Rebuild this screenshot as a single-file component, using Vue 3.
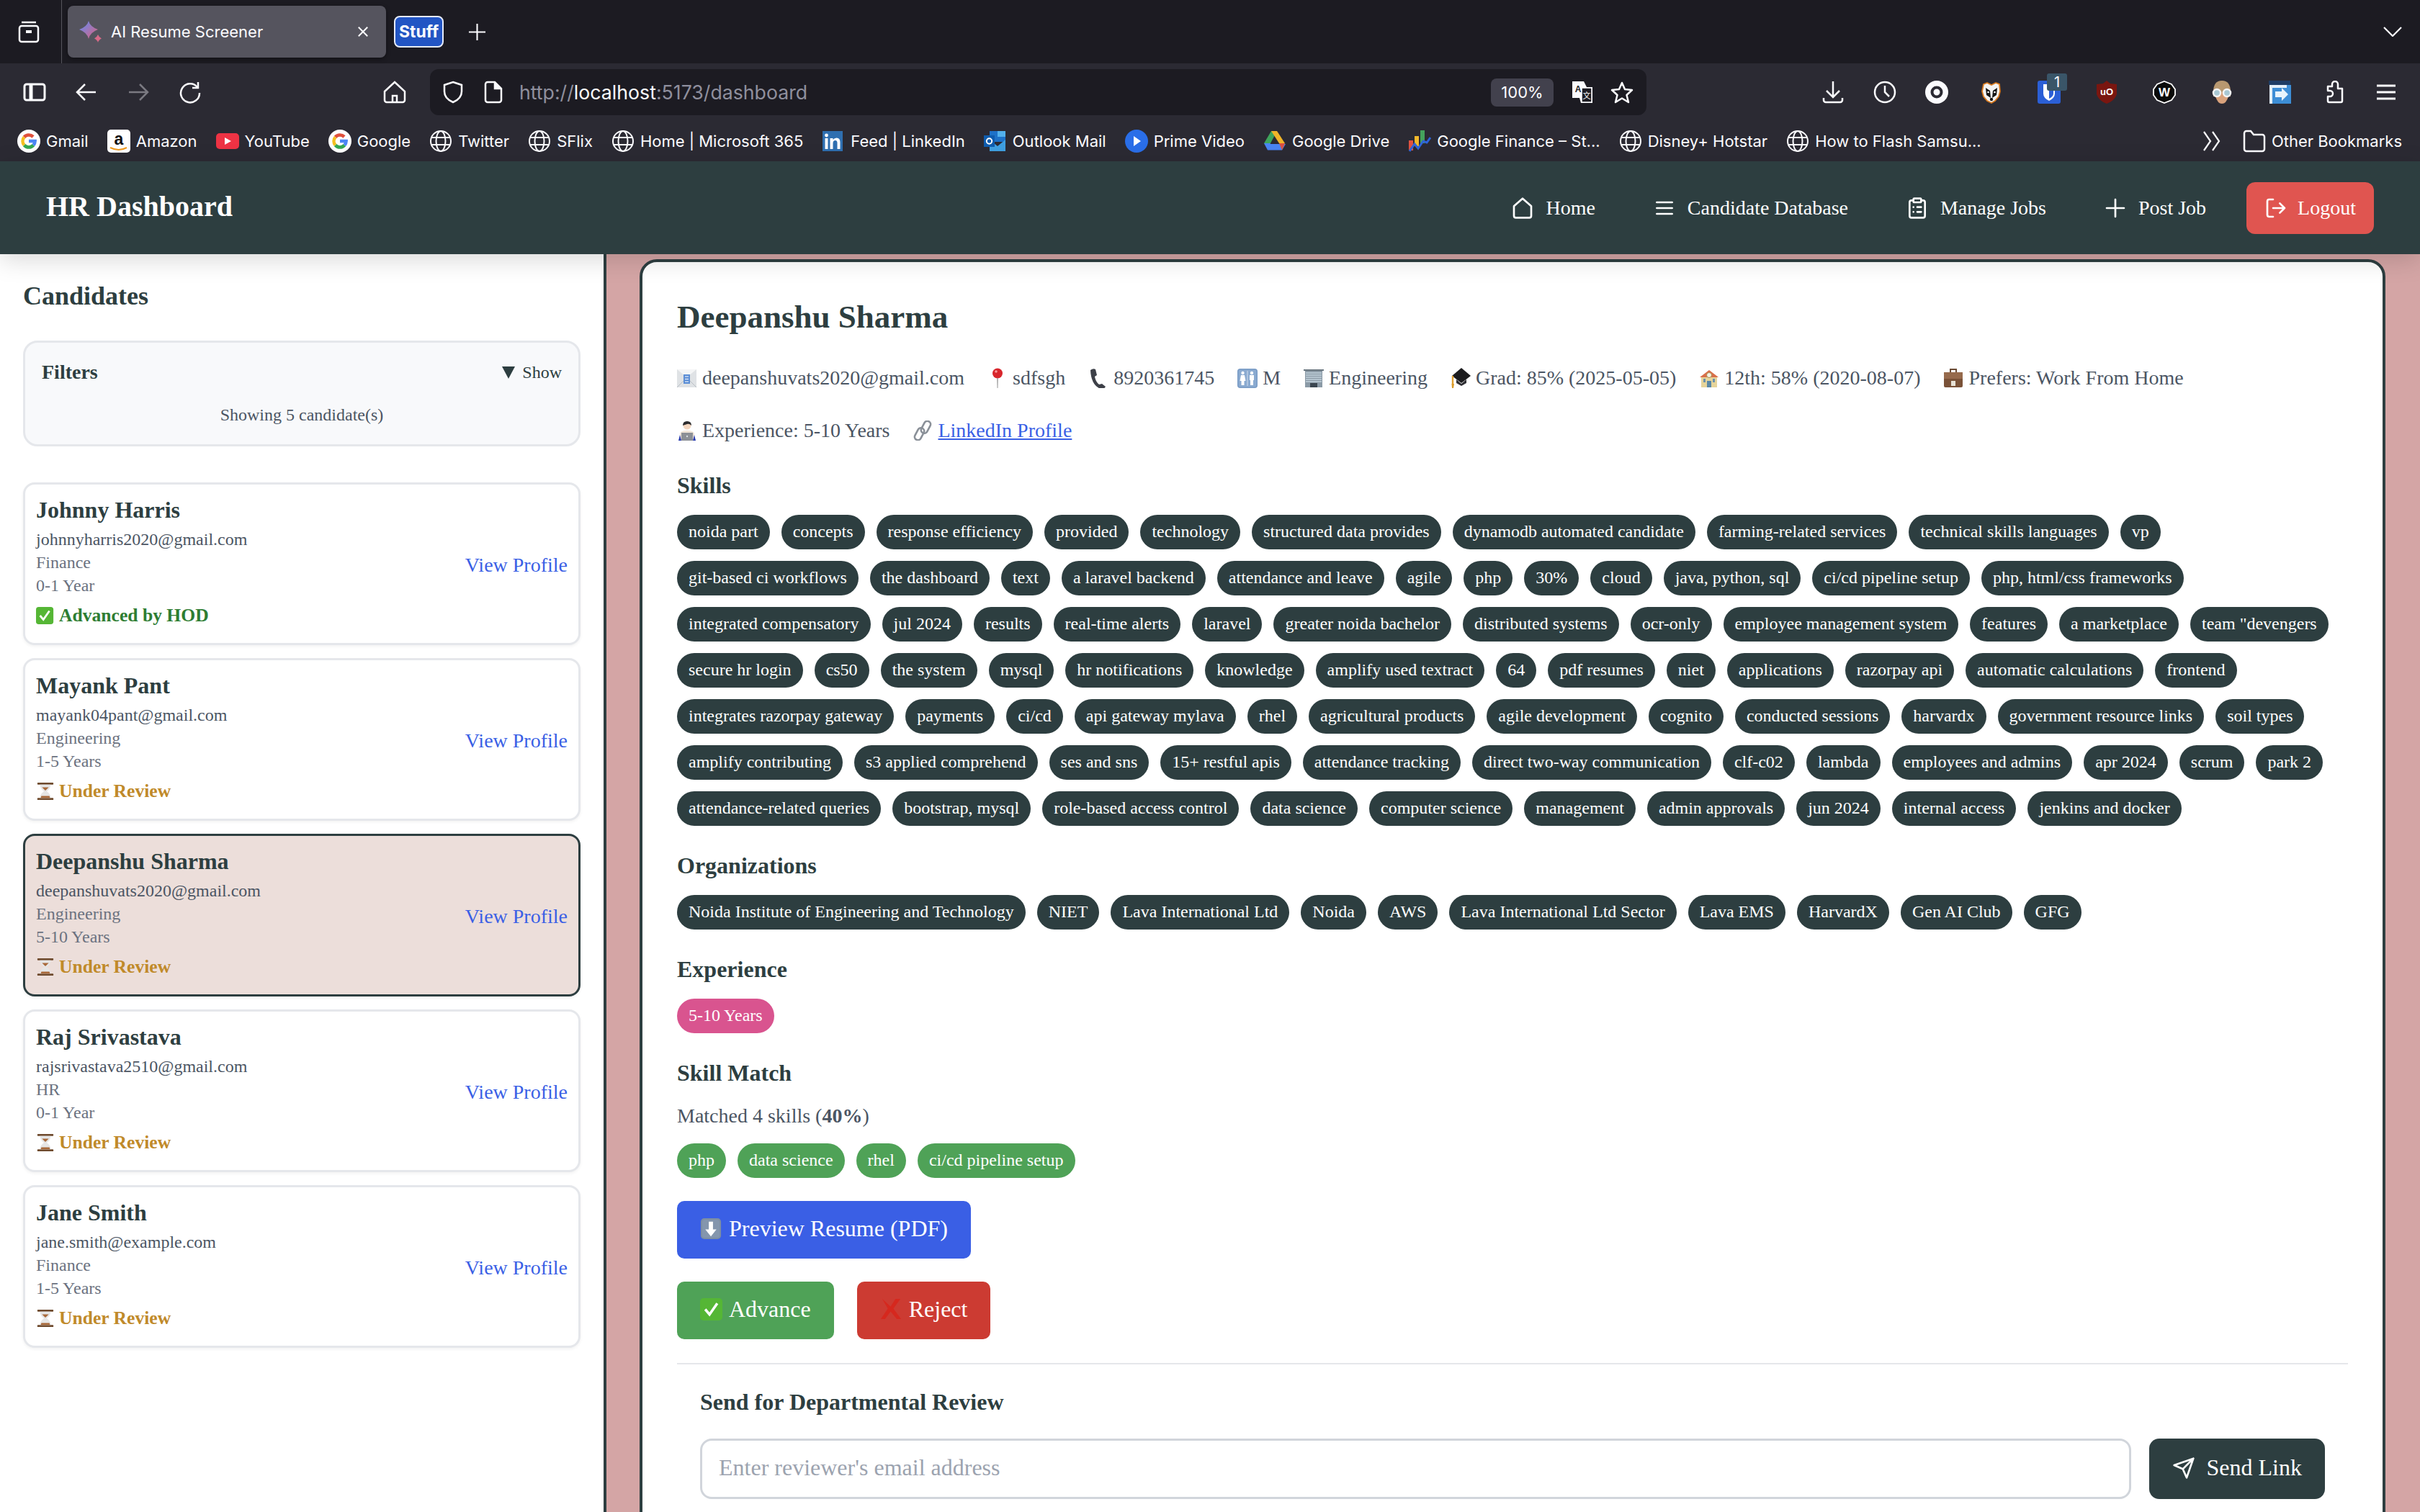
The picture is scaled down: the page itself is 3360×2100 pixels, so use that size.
<script setup>
const globe = '<g fill="none" stroke="#fbfbfe" stroke-width="2"><circle cx="16" cy="16" r="14"/><ellipse cx="16" cy="16" rx="6.5" ry="14"/><path d="M3 11h26M3 21h26"/></g>'
const google = '<circle cx="16" cy="16" r="16" fill="#fff"/><g fill="none" stroke-width="4.6"><path d="M9.6 10.4A8.6 8.6 0 0 1 22 10" stroke="#e0503c"/><path d="M9.6 10.4A8.6 8.6 0 0 0 9.6 21.6" stroke="#f4c020"/><path d="M9.6 21.6A8.6 8.6 0 0 0 22.4 21.6" stroke="#36a853"/><path d="M22.4 21.6A8.6 8.6 0 0 0 24.6 16H16" stroke="#4a85f4"/></g>'

const bookmarks = [
  { label: 'Gmail', icon: google },
  { label: 'Amazon', icon: '<rect width="32" height="32" rx="5" fill="#fff"/><text x="16" y="21" text-anchor="middle" font-family="Liberation Sans" font-weight="700" font-size="23" fill="#111">a</text><path d="M4 25q12 6 23 0" fill="none" stroke="#f09a1e" stroke-width="2"/>' },
  { label: 'YouTube', icon: '<rect y="5" width="32" height="22" rx="5" fill="#ee3344"/><path d="M12 11l9 5-9 5z" fill="#fff"/>' },
  { label: 'Google', icon: google },
  { label: 'Twitter', icon: globe },
  { label: 'SFlix', icon: globe },
  { label: 'Home | Microsoft 365', icon: globe },
  { label: 'Feed | LinkedIn', icon: '<rect x="1" y="2" width="28" height="28" fill="#2f6fb0"/><circle cx="6.5" cy="8" r="2.4" fill="#fff"/><path d="M4.5 12h4v15h-4zM11.500 12h4v2q2-2.500 5-2.500 5 0 5 6V27h-4v-8.500q0-3.500-2.600-3.500-3.400 0-3.400 4V27h-4z" fill="#fff"/>' },
  { label: 'Outlook Mail', icon: '<path d="M8 2h22v15H8z" fill="#1e72c8"/><path d="M19 2h11v8H19z" fill="#52b0ec"/><path d="M8 14l11 9 11-9v16H8z" fill="#3f9fe0"/><rect y="8" width="15" height="16" fill="#0f5cae"/><circle cx="7.500" cy="16" r="3.700" fill="none" stroke="#fff" stroke-width="2"/>' },
  { label: 'Prime Video', icon: '<circle cx="16" cy="16" r="16" fill="#2a6ee8"/><path d="M12 9l10 7-10 7z" fill="#fff"/>' },
  { label: 'Google Drive', icon: '<path d="M11 2h8l-9 17H1z" fill="#3fa45b"/><path d="M11 2h8l11 17h-8z" fill="#f0b429"/><path d="M7 20h24l-5 8.500H6z" fill="#4a85f4"/><path d="M22 19h8l-4 9.500z" fill="#dc5040"/><path d="M1 19l5 9.500 4-9.500z" fill="#4a85f4"/>' },
  { label: 'Google Finance – St...', icon: '<path d="M1 15h6v14H1z" fill="#df5240"/><path d="M9 9h6v14H9z" fill="#f3b82b"/><path d="M17 1h6v18h-6z" fill="#44a35c"/><path d="M2 30l7-10 5 6 7-10 5 2 5-7" fill="none" stroke="#2e63d8" stroke-width="3"/>' },
  { label: 'Disney+ Hotstar', icon: globe },
  { label: 'How to Flash Samsu...', icon: globe }
]

const emoji = {
  mail: '<rect x="0" y="2" width="27" height="25" fill="#dfe2e5"/><path d="M0 2l13.500 11L27 2z" fill="#f4f5f6"/><path d="M0 27l10-10M27 27L17 17" stroke="#b9bec4"/><rect x="9" y="9" width="9" height="13" fill="#5d8fd6"/><path d="M11 12h5M11 15.500h5M11 19h5" stroke="#fff" stroke-width="1.200"/>',
  pin: '<circle cx="14" cy="7.500" r="7" fill="#d8262c"/><circle cx="12" cy="5" r="1.800" fill="#f59a9a"/><path d="M13.200 14h1.600l-.3 14h-1z" fill="#9a9a9a"/>',
  phone: '<path d="M3 3q4-3 7-1l2 8-3 2q1 7 6 11l4-1 5 4q-2 4-7 3Q4 24 3 3z" fill="#3d4048"/>',
  restroom: '<rect x="0" y="1" width="28" height="27" rx="4" fill="#7a9cc6"/><rect x="1.500" y="2.500" width="25" height="24" rx="3" fill="#8aaad0"/><path d="M13.700 4v21h.6V4z" fill="#fff"/><circle cx="7.500" cy="7" r="2.200" fill="#fff"/><path d="M5 10h5l1.500 8H9.500v6h-4v-6H3.500z" fill="#fff"/><circle cx="20" cy="7" r="2.200" fill="#fff"/><path d="M17 10h6v7h-1v7h-4v-7h-1z" fill="#fff"/>',
  office: '<rect x="2" y="3" width="24" height="24" fill="#8b9aa6"/><path d="M3 7h22M3 10h22M3 13h22M3 16h22M3 19h22" stroke="#c4d3de" stroke-width="1.500"/><rect x="0" y="2" width="28" height="2" fill="#69767f"/><rect x="9" y="21" width="10" height="6" fill="#3b4650"/>',
  grad: '<path d="M15 0l13 11-13 10L2 11z" fill="#1c1c1e"/><path d="M8 16l7 6 7-6v5l-7 4-7-4z" fill="#2f2f33"/><path d="M3 11v12" stroke="#e0a030" stroke-width="2.400"/><path d="M1.500 22h3.500l-1 6H2z" fill="#d99a28"/>',
  school: '<rect x="3" y="11" width="22" height="16" fill="#e6d49a"/><path d="M1 13L14 3l13 10z" fill="#d96f4a"/><circle cx="14" cy="10" r="3.500" fill="#f4f1e4" stroke="#a88a4a"/><path d="M6 15h3v5H6zM19 15h3v5h-3z" fill="#6c93ad"/><rect x="11" y="18" width="6" height="9" fill="#5b88a6"/>',
  case: '<path d="M10 6V2h8v4" fill="none" stroke="#6a4a34" stroke-width="2"/><rect x="1" y="6" width="26" height="21" rx="2" fill="#7a5238"/><rect x="1" y="6" width="26" height="9" fill="#966a4c"/><rect x="11" y="18" width="6" height="7" fill="#e8e2d6"/>',
  tech: '<circle cx="14" cy="7" r="5.500" fill="#f4d6bf"/><path d="M8 7q0-6 6-6t6 6q-3-3-6-2t-6 2z" fill="#2b2b2d"/><path d="M4 28v-9q0-5 10-5t10 5v9z" fill="#f0e5d8"/><path d="M4 20l-2 8h4zM24 20l2 8h-4z" fill="#2a3db0"/><rect x="6" y="17" width="16" height="11" fill="#8c9096"/><circle cx="14" cy="22" r="1.200" fill="#dcdfe2"/>',
  link: '<g fill="none" stroke="#8a9098" stroke-width="2.600"><rect x="14" y="0" width="9" height="18" rx="4.500" transform="rotate(28 18 9)"/><rect x="5" y="10" width="9" height="18" rx="4.500" transform="rotate(28 10 19)"/></g>',
  hourglass: '<rect x="2" y="1" width="24" height="3" rx="1" fill="#6e4a2d"/><rect x="2" y="24" width="24" height="3" rx="1" fill="#6e4a2d"/><path d="M6 4h16q0 6-6 10 6 4 6 10H6q0-6 6-10Q6 10 6 4z" fill="#e6e6e6"/><path d="M8 21h12l1 3H7z" fill="#a8693a"/><path d="M9 8h10l-5 5z" fill="#a8693a"/>',
  check: '<rect x="0" y="1" width="26" height="26" rx="4" fill="#55b635"/><path d="M6 14l5 6 9-13" fill="none" stroke="#fff" stroke-width="3"/>',
  down: '<rect x="1" y="1" width="29" height="30" rx="5" fill="#7d8ea3"/><rect x="3" y="3" width="25" height="26" rx="4" fill="#8496ad"/><path d="M12.500 6h6v11h5L15.500 27l-8-10h5z" fill="#fff"/>',
  cross: '<path d="M3 1l12 11L22 1h7L19 15l11 15h-6L15 19 7 30H1l10-15z" fill="#d6281e"/>'
}

const metaFirst = [
  { icon: 'mail', text: 'deepanshuvats2020@gmail.com' },
  { icon: 'pin', text: 'sdfsgh' },
  { icon: 'phone', text: '8920361745' },
  { icon: 'restroom', text: 'M' },
  { icon: 'office', text: 'Engineering' },
  { icon: 'grad', text: 'Grad: 85% (2025-05-05)' },
  { icon: 'school', text: '12th: 58% (2020-08-07)' },
  { icon: 'case', text: 'Prefers: Work From Home' },
  { icon: 'tech', text: 'Experience: 5-10 Years' }
]

const candidates = [
  { name: 'Johnny Harris', email: 'johnnyharris2020@gmail.com', dept: 'Finance', exp: '0-1 Year', advanced: true },
  { name: 'Mayank Pant', email: 'mayank04pant@gmail.com', dept: 'Engineering', exp: '1-5 Years' },
  { name: 'Deepanshu Sharma', email: 'deepanshuvats2020@gmail.com', dept: 'Engineering', exp: '5-10 Years', active: true },
  { name: 'Raj Srivastava', email: 'rajsrivastava2510@gmail.com', dept: 'HR', exp: '0-1 Year' },
  { name: 'Jane Smith', email: 'jane.smith@example.com', dept: 'Finance', exp: '1-5 Years' }
]

const skills = [
  'noida part', 'concepts', 'response efficiency', 'provided', 'technology', 'structured data provides', 'dynamodb automated candidate', 'farming-related services', 'technical skills languages', 'vp',
  'git-based ci workflows', 'the dashboard', 'text', 'a laravel backend', 'attendance and leave', 'agile', 'php', '30%', 'cloud', 'java, python, sql', 'ci/cd pipeline setup', 'php, html/css frameworks',
  'integrated compensatory', 'jul 2024', 'results', 'real-time alerts', 'laravel', 'greater noida bachelor', 'distributed systems', 'ocr-only', 'employee management system', 'features', 'a marketplace', 'team "devengers',
  'secure hr login', 'cs50', 'the system', 'mysql', 'hr notifications', 'knowledge', 'amplify used textract', '64', 'pdf resumes', 'niet', 'applications', 'razorpay api', 'automatic calculations', 'frontend',
  'integrates razorpay gateway', 'payments', 'ci/cd', 'api gateway mylava', 'rhel', 'agricultural products', 'agile development', 'cognito', 'conducted sessions', 'harvardx', 'government resource links', 'soil types',
  'amplify contributing', 's3 applied comprehend', 'ses and sns', '15+ restful apis', 'attendance tracking', 'direct two-way communication', 'clf-c02', 'lambda', 'employees and admins', 'apr 2024', 'scrum', 'park 2',
  'attendance-related queries', 'bootstrap, mysql', 'role-based access control', 'data science', 'computer science', 'management', 'admin approvals', 'jun 2024', 'internal access', 'jenkins and docker'
]

const organizations = ['Noida Institute of Engineering and Technology', 'NIET', 'Lava International Ltd', 'Noida', 'AWS', 'Lava International Ltd Sector', 'Lava EMS', 'HarvardX', 'Gen AI Club', 'GFG']
const matched = ['php', 'data science', 'rhel', 'ci/cd pipeline setup']
</script>

<template>
  <div class="app">
    <!-- browser window -->
    <div class="tabstrip">
      <svg class="tb-icon view-icon" viewBox="0 0 32 32" fill="none" stroke="#fbfbfe" stroke-width="2.500"><path d="M6 3h20"/><rect x="3" y="8" width="26" height="22" rx="3"/><rect x="12" y="14" width="8" height="4" fill="#fbfbfe" stroke="none"/></svg>
      <div class="tab">
        <svg class="tab-icon" viewBox="0 0 32 30"><defs><linearGradient id="spark" x1="0" y1="0" x2="1" y2="1"><stop offset="0" stop-color="#5f8df5"/><stop offset="1" stop-color="#e0607a"/></linearGradient></defs><path d="M13 0q2 8 13 12-11 4-13 13Q11 16 0 12 11 8 13 0z" fill="url(#spark)"/><path d="M26 19q1 3 5 5.500-4 2-5 5.500-1-3.500-5-5.500 4-2.500 5-5.500z" fill="#d86a88"/></svg>
        <span class="tab-title">AI Resume Screener</span>
        <svg class="tab-close" viewBox="0 0 18 18" fill="none" stroke="#fbfbfe" stroke-width="2.200"><path d="M2 2l14 14M16 2L2 16"/></svg>
      </div>
      <div class="tab-group">Stuff</div>
      <svg class="tab-plus" viewBox="0 0 26 26" fill="none" stroke="#fbfbfe" stroke-width="2.200"><path d="M13 1v24M1 13h24"/></svg>
      <svg class="tab-list" viewBox="0 0 28 14" fill="none" stroke="#fbfbfe" stroke-width="2.200"><path d="M2 1l12 12L26 1"/></svg>
    </div>

    <div class="toolbar">
      <div class="tb-nav">
        <svg class="tb-icon" viewBox="0 0 32 32" fill="none" stroke="#fbfbfe" stroke-width="3"><rect x="2" y="5" width="28" height="22" rx="3"/><path d="M11 5v22" stroke-width="5"/></svg>
        <svg class="tb-icon" viewBox="0 0 32 32" fill="none" stroke="#fbfbfe" stroke-width="2.500"><path d="M29 16H3M14 5L3 16l11 11"/></svg>
        <svg class="tb-icon" viewBox="0 0 32 32" fill="none" stroke="#7b7a82" stroke-width="2.500"><path d="M3 16h26M18 5l11 11-11 11"/></svg>
        <svg class="tb-icon" viewBox="0 0 32 32" fill="none" stroke="#fbfbfe" stroke-width="2.500"><path d="M26 9A13 13 0 1 0 29 17"/><path d="M27 2v8h-8"/></svg>
      </div>
      <svg class="tb-icon home-btn" viewBox="0 0 32 32" fill="none" stroke="#fbfbfe" stroke-width="2.500"><path d="M2 15L16 2l14 13v12a3 3 0 0 1-3 3H5a3 3 0 0 1-3-3z"/><path d="M13 30v-9h6v9"/></svg>
      <div class="urlbar">
        <svg class="tb-icon" viewBox="0 0 32 32" fill="none" stroke="#fbfbfe" stroke-width="2.500"><path d="M16 2l12 4v9q0 10-12 15Q4 25 4 15V6z"/></svg>
        <svg class="tb-icon doc" viewBox="0 0 32 32" fill="none" stroke="#fbfbfe" stroke-width="2.500"><path d="M5 5a3 3 0 0 1 3-3h10l9 9v16a3 3 0 0 1-3 3H8a3 3 0 0 1-3-3z"/><path d="M18 2v9h9" fill="#fbfbfe"/></svg>
        <span class="url"><span class="url-dim">http://</span>localhost<span class="url-dim">:5173/dashboard</span></span>
        <span class="zoom-chip">100%</span>
        <svg class="tb-icon" viewBox="0 0 32 32"><path d="M2 1h16l4 8h8v22H14l-2-7H2z" fill="#fbfbfe"/><rect x="15" y="10" width="14" height="20" fill="#1c1b22" stroke="#fbfbfe" stroke-width="1.500"/><text x="10" y="16" text-anchor="middle" font-family="Liberation Sans" font-weight="700" font-size="12" fill="#1c1b22">A</text><text x="22" y="25" text-anchor="middle" font-family="Noto Sans CJK SC" font-size="11" fill="#fbfbfe">文</text></svg>
        <svg class="tb-icon star" viewBox="0 0 32 32" fill="none" stroke="#fbfbfe" stroke-width="2.500" stroke-linejoin="round"><path d="M16 3l4 9 10 1-7.500 7 2.500 10-9-5.500L7 30l2.500-10L2 13l10-1z"/></svg>
      </div>
      <div class="tb-right">
        <div class="tb-group">
          <svg class="tb-icon" viewBox="0 0 32 32" fill="none" stroke="#fbfbfe" stroke-width="2.500"><path d="M16 1v21M7 14l9 9 9-9M3 24v3a3 3 0 0 0 3 3h20a3 3 0 0 0 3-3v-3"/></svg>
          <svg class="tb-icon" viewBox="0 0 32 32" fill="none" stroke="#fbfbfe" stroke-width="2.500"><circle cx="16" cy="16" r="14"/><path d="M16 7v9l6 6"/></svg>
          <svg class="tb-icon" viewBox="0 0 32 32"><circle cx="16" cy="16" r="16" fill="#fbfbfe"/><circle cx="16" cy="16" r="6.500" fill="none" stroke="#2b2a33" stroke-width="4"/></svg>
        </div>
        <div class="ext-group">
          <svg class="tb-icon" viewBox="0 0 32 32"><path d="M5 5l5-2 6 3 6-3 5 2 1 10-2 7-5 6-5 3-6-3-5-6-2-7z" fill="#f4f4f4" stroke="#d97a20" stroke-width="1.800"/><path d="M8 10l6 4 1 10-6-4zM24 10l-6 4-1 10 6-4z" fill="#141414"/><circle cx="16" cy="26" r="2.200" fill="#141414"/><circle cx="11.500" cy="16" r="1.300" fill="#fff"/><circle cx="20.500" cy="16" r="1.300" fill="#fff"/></svg>
          <div class="bitwarden">
            <svg class="tb-icon" viewBox="0 0 32 32"><rect width="32" height="32" rx="3" fill="#2b5fd6"/><path d="M8 5h16v13q0 6-8 10-8-4-8-10z" fill="#fff"/><path d="M16 7h6v11q0 4-6 7z" fill="#2b5fd6"/></svg>
            <span class="ext-badge">1</span>
          </div>
          <svg class="tb-icon" viewBox="0 0 32 32"><path d="M16 0l5 4 9 1v14q-3 9-14 13Q5 28 2 19V5l9-1z" fill="#7a1610"/><text x="16" y="20" text-anchor="middle" font-family="Liberation Sans" font-weight="700" font-size="13" fill="#fff">uO</text></svg>
          <svg class="tb-icon" viewBox="0 0 32 32"><path d="M16 1l10 4 5 7v8l-5 7-10 4-10-4-5-7v-8l5-7z" fill="#0a0a0a" stroke="#fff" stroke-width="1.800"/><text x="16" y="22" text-anchor="middle" font-family="Liberation Sans" font-weight="700" font-size="17" fill="#fff">W</text></svg>
          <svg class="tb-icon" viewBox="0 0 32 32"><path d="M4 16Q4 0 16 0t12 16v6H4z" fill="#b89870"/><path d="M7 16h18v6q-3 10-9 10t-9-10z" fill="#d9a27c"/><g fill="#a8c8d4" stroke="#f4f4f4" stroke-width="2.500"><circle cx="9" cy="17" r="5"/><circle cx="23" cy="17" r="5"/></g></svg>
          <svg class="tb-icon" viewBox="0 0 32 32"><rect x="1" y="0" width="30" height="6" fill="#1e3d66"/><rect x="2" y="6" width="30" height="26" fill="#3d8ed6"/><rect x="2" y="6" width="24" height="4" fill="#e4f0fa"/><path d="M2 6h4v26H2z" fill="#e4f0fa"/><path d="M10 15h9v-5l9 9-9 9v-5h-9z" fill="#e8f4fc"/></svg>
        </div>
        <div class="tb-group">
          <svg class="tb-icon" viewBox="0 0 32 32" fill="none" stroke="#fbfbfe" stroke-width="2.500" stroke-linejoin="round"><path d="M13 8V5a4 4 0 0 1 8 0v6h6v17a2 2 0 0 1-2 2H9a2 2 0 0 1-2-2v-6h3a4 4 0 0 0 0-8H7v-6z"/></svg>
          <svg class="tb-icon" viewBox="0 0 32 32" fill="none" stroke="#fbfbfe" stroke-width="2.800"><path d="M3 7h26M3 16h26M3 25h26"/></svg>
        </div>
      </div>
    </div>

    <div class="bookmarks">
      <div v-for="b in bookmarks" :key="b.label" class="bookmark">
        <svg class="bm-icon" viewBox="0 0 32 32" v-html="b.icon"></svg>
        <span>{{ b.label }}</span>
      </div>
      <div class="bm-right">
        <svg class="bm-more" viewBox="0 0 26 30" fill="none" stroke="#fbfbfe" stroke-width="2.200"><path d="M2 2l9 13-9 13M14 2l9 13-9 13"/></svg>
        <div class="bookmark">
          <svg class="bm-icon" viewBox="0 0 32 32" fill="none" stroke="#fbfbfe" stroke-width="2.500"><path d="M2 5a3 3 0 0 1 3-3h6l4 5h12a3 3 0 0 1 3 3v17a3 3 0 0 1-3 3H5a3 3 0 0 1-3-3z"/></svg>
          <span>Other Bookmarks</span>
        </div>
      </div>
    </div>

    <!-- page -->
    <header class="nav">
      <div class="brand">HR Dashboard</div>
      <nav class="nav-links">
        <a class="nav-link">
          <svg class="nav-icon" viewBox="0 0 24 24"><path d="M3 10l9-8 9 8v10a2 2 0 0 1-2 2H5a2 2 0 0 1-2-2z"/></svg>
          Home
        </a>
        <a class="nav-link">
          <svg class="nav-icon" viewBox="0 0 24 24"><path d="M4 6h16M4 12h16M4 18h16"/></svg>
          Candidate Database
        </a>
        <a class="nav-link">
          <svg class="nav-icon" viewBox="0 0 24 24"><rect x="8" y="2" width="8" height="4" rx="1"/><path d="M16 4h2a2 2 0 0 1 2 2v14a2 2 0 0 1-2 2H6a2 2 0 0 1-2-2V6a2 2 0 0 1 2-2h2M12 11h4M12 16h4M8 11h.01M8 16h.01"/></svg>
          Manage Jobs
        </a>
        <a class="nav-link">
          <svg class="nav-icon" viewBox="0 0 24 24"><path d="M12 3v18M3 12h18"/></svg>
          Post Job
        </a>
        <button class="logout">
          <svg class="nav-icon" viewBox="0 0 24 24"><path d="M9 21H5a2 2 0 0 1-2-2V5a2 2 0 0 1 2-2h4M16 17l5-5-5-5M21 12H9"/></svg>
          Logout
        </button>
      </nav>
    </header>

    <div class="layout">
      <aside class="sidebar">
        <h2 class="side-title">Candidates</h2>
        <div class="filters">
          <div class="filters-head">
            <span class="filters-label">Filters</span>
            <span class="filters-toggle"><i class="tri"></i>Show</span>
          </div>
          <div class="filters-count">Showing 5 candidate(s)</div>
        </div>
        <div class="cand-list">
          <div v-for="c in candidates" :key="c.email" class="cand" :class="{ active: c.active }">
            <div>
              <div class="cand-name">{{ c.name }}</div>
              <div class="cand-email">{{ c.email }}</div>
              <div class="cand-sub">{{ c.dept }}</div>
              <div class="cand-sub">{{ c.exp }}</div>
              <div class="cand-status" :class="c.advanced ? 'ok' : 'wait'">
                <svg class="status-icon" viewBox="0 0 28 28" v-html="c.advanced ? emoji.check : emoji.hourglass"></svg>
                {{ c.advanced ? 'Advanced by HOD' : 'Under Review' }}
              </div>
            </div>
            <a class="view-link">View Profile</a>
          </div>
        </div>
      </aside>

      <main class="main">
        <section class="detail">
          <h1 class="detail-name">Deepanshu Sharma</h1>
          <div class="meta">
            <span v-for="m in metaFirst" :key="m.icon" class="meta-item">
              <svg class="meta-icon" viewBox="0 0 28 28" v-html="emoji[m.icon]"></svg>{{ m.text }}
            </span>
            <span class="meta-item">
              <svg class="meta-icon" viewBox="0 0 28 28" v-html="emoji.link"></svg><a class="li-link">LinkedIn Profile</a>
            </span>
          </div>

          <h3 class="sec-title">Skills</h3>
          <div class="tags">
            <span v-for="(s, i) in skills" :key="i" class="tag">{{ s }}</span>
          </div>

          <h3 class="sec-title">Organizations</h3>
          <div class="tags">
            <span v-for="o in organizations" :key="o" class="tag">{{ o }}</span>
          </div>

          <h3 class="sec-title">Experience</h3>
          <div class="tags">
            <span class="tag pink">5-10 Years</span>
          </div>

          <h3 class="sec-title">Skill Match</h3>
          <p class="match-line">Matched 4 skills (<b>40%</b>)</p>
          <div class="tags">
            <span v-for="m in matched" :key="m" class="tag green">{{ m }}</span>
          </div>

          <button class="btn blue preview">
            <svg class="btn-emoji" viewBox="0 0 32 32" v-html="emoji.down"></svg>Preview Resume (PDF)
          </button>
          <div class="actions">
            <button class="btn greenbtn">
              <svg class="btn-emoji" viewBox="0 1 26 26" v-html="emoji.check"></svg>Advance
            </button>
            <button class="btn red">
              <svg class="btn-emoji" viewBox="0 0 32 32" v-html="emoji.cross"></svg>Reject
            </button>
          </div>

          <div class="review">
            <h3 class="review-title">Send for Departmental Review</h3>
            <div class="review-form">
              <input class="review-input" type="email" placeholder="Enter reviewer's email address">
              <button class="send-btn">
                <svg class="nav-icon" viewBox="0 0 24 24"><path d="M22 2l-7 20-4-9-9-4zM22 2L11 13"/></svg>
                Send Link
              </button>
            </div>
          </div>
        </section>
      </main>
    </div>
  </div>
</template>

<style>
body { margin: 0; }
</style>

<style scoped>
.app {
  width: 3360px;
  height: 2100px;
  overflow: hidden;
  display: flex;
  flex-direction: column;
  font-family: "Liberation Serif", serif;
  background: #fff;
}

/* browser */
.tabstrip {
  height: 88px;
  flex-shrink: 0;
  background: #1c1b22;
  display: flex;
  align-items: center;
  position: relative;
  font-family: Inter, sans-serif;
  color: #fbfbfe;
}
.tb-icon { width: 32px; height: 32px; flex-shrink: 0; display: block; }
.view-icon { margin-left: 24px; margin-right: 29px; }
.tabstrip::before {
  content: "";
  position: absolute;
  left: 85px;
  top: 0;
  bottom: 0;
  width: 1px;
  background: #55545c;
}
.tab {
  width: 442px;
  height: 72px;
  margin-left: 9px;
  box-sizing: border-box;
  padding: 0 24px 0 16px;
  border-radius: 8px;
  background: #55545e;
  display: flex;
  align-items: center;
  box-shadow: 0 2px 6px rgba(0, 0, 0, .4);
}
.tab-icon { width: 32px; height: 30px; margin-right: 12px; flex-shrink: 0; }
.tab-title { font-size: 22px; flex: 1; white-space: nowrap; }
.tab-close { width: 16px; height: 16px; }
.tab-group {
  margin-left: 11px;
  width: 69px;
  height: 44px;
  box-sizing: border-box;
  border: 2px solid #e6ecfa;
  border-radius: 8px;
  background: #2255c4;
  font-size: 23px;
  font-weight: 700;
  line-height: 40px;
  text-align: center;
}
.tab-plus { width: 25px; height: 25px; margin-left: 34px; }
.tab-list { width: 28px; height: 14px; margin-left: auto; margin-right: 24px; }

.toolbar {
  height: 72px;
  flex-shrink: 0;
  background: #2b2a33;
  display: flex;
  align-items: flex-end;
  padding-left: 32px;
  font-family: Inter, sans-serif;
  color: #fbfbfe;
}
.tb-nav { height: 64px; display: flex; align-items: center; gap: 40px; }
.home-btn { align-self: flex-end; margin: 0 0 16px 252px; }
.urlbar {
  width: 1689px;
  height: 64px;
  margin-left: 33px;
  box-sizing: border-box;
  padding: 0 18px 0 16px;
  border-radius: 12px;
  background: #1c1b22;
  display: flex;
  align-items: center;
}
.doc { margin-left: 24px; }
.url { margin-left: 20px; font-size: 26.7px; flex: 1; white-space: nowrap; }
.url-dim { color: #8f8f9d; }
.zoom-chip {
  width: 87px;
  height: 39px;
  border-radius: 8px;
  background: #42414d;
  font-size: 22px;
  line-height: 39px;
  text-align: center;
  margin-right: 24px;
}
.star { margin-left: 23px; }
.tb-right {
  height: 64px;
  margin-left: 243px;
  display: flex;
  align-items: center;
  gap: 44px;
}
.tb-group { display: flex; align-items: center; gap: 40px; }
.ext-group { display: flex; align-items: center; gap: 48px; }
.bitwarden { position: relative; }
.ext-badge {
  position: absolute;
  left: 13px;
  top: -10px;
  width: 28px;
  height: 24px;
  border-radius: 3px;
  background: #3a5568;
  font-size: 20px;
  line-height: 24px;
  text-align: center;
}

.bookmarks {
  height: 64px;
  flex-shrink: 0;
  box-sizing: border-box;
  background: #2b2a33;
  display: flex;
  align-items: center;
  gap: 26px;
  padding: 8px 25px 0 24px;
  font-family: Inter, sans-serif;
  font-size: 22px;
  color: #fbfbfe;
  white-space: nowrap;
}
.bookmark { display: flex; align-items: center; gap: 8px; }
.bm-icon { width: 32px; height: 32px; flex-shrink: 0; }
.bm-right { margin-left: auto; display: flex; align-items: center; gap: 30px; }
.bm-more { width: 26px; height: 30px; }

/* nav */
.nav {
  height: 129px;
  flex-shrink: 0;
  box-sizing: border-box;
  padding: 0 64px;
  background: #2d3e40;
  color: #fff;
  display: flex;
  align-items: center;
  justify-content: space-between;
  position: relative;
  z-index: 2;
  box-shadow: 0 8px 32px rgba(0, 0, 0, .15);
}
.brand { font-size: 40px; font-weight: 700; padding-bottom: 4px; }
.nav-links { display: flex; align-items: center; gap: 32px; }
.nav-link {
  display: flex;
  align-items: center;
  gap: 16px;
  padding: 0 24px;
  font-size: 28px;
  color: #fff;
}
.nav-icon {
  width: 32px;
  height: 32px;
  flex-shrink: 0;
  fill: none;
  stroke: currentColor;
  stroke-width: 2;
  stroke-linecap: round;
  stroke-linejoin: round;
}
.logout {
  height: 72px;
  padding: 0 25px;
  border: none;
  border-radius: 12px;
  background: #e05550;
  color: #fff;
  font-family: inherit;
  font-size: 28px;
  display: flex;
  align-items: center;
  gap: 14px;
}

/* sidebar */
.layout { flex: 1; min-height: 0; display: flex; }
.sidebar {
  width: 842px;
  flex-shrink: 0;
  box-sizing: border-box;
  padding: 37px 32px 0;
  background: #fff;
  border-right: 4px solid #2d3e40;
}
.side-title {
  margin: 0 0 41px;
  font-size: 36px;
  line-height: 42px;
  color: #2d3e40;
}
.filters {
  height: 147px;
  box-sizing: border-box;
  padding: 23px 23px 0;
  background: #f8f9fb;
  border: 3px solid #e5e7eb;
  border-radius: 20px;
}
.filters-head { display: flex; justify-content: space-between; align-items: center; height: 36px; }
.filters-label { font-size: 28px; font-weight: 700; color: #2d3e40; }
.filters-toggle { font-size: 24px; color: #2d3e40; display: flex; align-items: center; gap: 10px; }
.tri {
  width: 0;
  height: 0;
  border-left: 9px solid transparent;
  border-right: 9px solid transparent;
  border-top: 17px solid #2d3e40;
}
.filters-count {
  margin-top: 25px;
  font-size: 24px;
  line-height: 32px;
  color: #4b5563;
  text-align: center;
}
.cand-list { margin-top: 50px; display: flex; flex-direction: column; gap: 18px; }
.cand {
  height: 226px;
  box-sizing: border-box;
  padding: 15px 15px 22px;
  border: 3px solid #e5e7eb;
  border-radius: 16px;
  background: #fff;
  box-shadow: 0 2px 4px rgba(0, 0, 0, .05);
  display: flex;
  justify-content: space-between;
  align-items: center;
}
.cand.active { background: #ecdeda; border-color: #2d3e40; }
.cand-name { font-size: 32px; font-weight: 700; line-height: 40px; color: #2d3e40; margin-bottom: 5px; }
.cand-email { font-size: 24px; line-height: 32px; color: #4b5563; }
.cand-sub { font-size: 24px; line-height: 32px; color: #6b7280; }
.cand-status {
  margin-top: 10px;
  font-size: 25.6px;
  font-weight: 700;
  line-height: 32px;
  display: flex;
  align-items: center;
  gap: 6px;
}
.cand-status.ok { color: #2e7d32; }
.cand-status.wait { color: #c08a2a; }
.status-icon { width: 26px; height: 26px; }
.view-link { font-size: 28px; color: #3a5fe5; margin-top: 10px; }

/* detail */
.main {
  flex: 1;
  min-width: 0;
  box-sizing: border-box;
  padding: 7px 48px 0 46px;
  background: #d4a5a5;
  overflow: hidden;
}
.detail {
  box-sizing: border-box;
  min-height: 1800px;
  padding: 50px 48px 48px;
  background: #fff;
  border: 4px solid #2d3e40;
  border-radius: 24px;
}
.detail-name {
  margin: 0 0 38px;
  font-size: 45px;
  line-height: 52px;
  color: #2d3e40;
}
.meta { display: flex; flex-wrap: wrap; gap: 32px; margin-bottom: 37px; }
.meta-item {
  display: flex;
  align-items: center;
  gap: 7px;
  font-size: 28px;
  line-height: 41px;
  color: #4b5563;
}
.meta-icon { width: 28px; height: 28px; flex-shrink: 0; }
.li-link { color: #3a5fe5; text-decoration: underline; }
.sec-title {
  margin: 36px 0 22px;
  font-size: 32px;
  line-height: 38px;
  color: #2d3e40;
}
.meta + .sec-title { margin-top: 0; }
.tags { display: flex; flex-wrap: wrap; gap: 16px; }
.tag {
  height: 48px;
  padding: 0 16px;
  border-radius: 24px;
  background: #2d3e40;
  color: #fff;
  font-size: 24px;
  line-height: 46px;
  white-space: nowrap;
}
.tag.pink { background: #d9548f; }
.tag.green { background: #4fa257; }
.match-line {
  margin: -2px 0 18px;
  font-size: 28px;
  line-height: 41px;
  color: #4b5563;
}
.btn {
  height: 80px;
  padding: 0 32px 4px;
  border: none;
  border-radius: 10px;
  color: #fff;
  font-family: inherit;
  font-size: 32px;
  display: flex;
  align-items: center;
  gap: 9px;
}
.btn.blue { background: #3a5fe5; }
.btn.greenbtn { background: #4fa257; }
.btn.red { background: #cc3b32; }
.preview { margin-top: 32px; }
.btn-emoji { width: 31px; height: 31px; flex-shrink: 0; }
.actions { display: flex; gap: 32px; margin-top: 32px; }
.review {
  margin-top: 33px;
  padding: 33px 32px 0;
  border-top: 2px solid #e5e7eb;
}
.review-title {
  margin: 0 0 32px;
  font-size: 32px;
  line-height: 38px;
  color: #2d3e40;
}
.review-form { display: flex; gap: 25px; }
.review-input {
  flex: 1;
  min-width: 0;
  height: 84px;
  box-sizing: border-box;
  padding: 0 23px 3px;
  border: 3px solid #d1d5db;
  border-radius: 16px;
  font-family: inherit;
  font-size: 32px;
  outline: none;
}
.review-input::placeholder { color: #9ca3af; }
.send-btn {
  height: 84px;
  padding: 0 32px 3px;
  border: none;
  border-radius: 14px;
  background: #2d3e40;
  color: #fff;
  font-family: inherit;
  font-size: 32px;
  display: flex;
  align-items: center;
  gap: 16px;
  flex-shrink: 0;
}
</style>
